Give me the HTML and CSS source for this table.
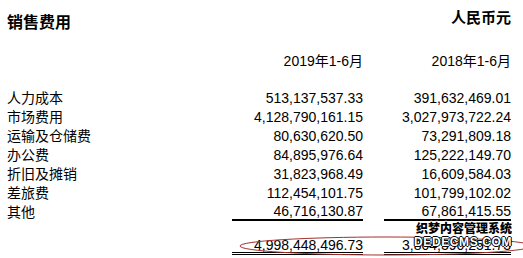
FILE: index.html
```html
<!DOCTYPE html>
<html lang="zh-CN">

<head>
	<meta charset="UTF-8">
	<meta name="viewport" content="width=device-width, initial-scale=1.0">
	<title>销售费用</title>
	<link rel="stylesheet" href="styles.css">
</head>

<body>
	<div class="sheet">
		<div class="head">
			<h1>销售费用</h1>
			<span class="unit">人民币元</span>
		</div>

		<div class="row periods">
			<span></span>
			<span class="num">2019年1-6月</span>
			<span class="num">2018年1-6月</span>
		</div>

		<div class="rows">
			<div class="row">
				<span>人力成本</span>
				<span class="num">513,137,537.33</span>
				<span class="num">391,632,469.01</span>
			</div>
			<div class="row">
				<span>市场费用</span>
				<span class="num">4,128,790,161.15</span>
				<span class="num">3,027,973,722.24</span>
			</div>
			<div class="row">
				<span>运输及仓储费</span>
				<span class="num">80,630,620.50</span>
				<span class="num">73,291,809.18</span>
			</div>
			<div class="row">
				<span>办公费</span>
				<span class="num">84,895,976.64</span>
				<span class="num">125,222,149.70</span>
			</div>
			<div class="row">
				<span>折旧及摊销</span>
				<span class="num">31,823,968.49</span>
				<span class="num">16,609,584.03</span>
			</div>
			<div class="row">
				<span>差旅费</span>
				<span class="num">112,454,101.75</span>
				<span class="num">101,799,102.02</span>
			</div>
			<div class="row last">
				<span>其他</span>
				<span class="num">46,716,130.87</span>
				<span class="num">67,861,415.55</span>
			</div>
		</div>

		<div class="row total">
			<span></span>
			<span class="num">4,998,448,496.73</span>
			<span class="num">3,804,390,251.73</span>
		</div>

		<svg class="mark" width="523" height="40" viewBox="0 0 523 40">
			<ellipse cx="386" cy="27" rx="146" ry="9" fill="none" stroke="#a3302e" stroke-width="1" />
		</svg>

		<div class="watermark">
			<div class="wm-cn">织梦内容管理系统</div>
			<div class="wm-en">DEDECMS.COM</div>
		</div>
	</div>
</body>

</html>
```

FILE: styles.css
```css
* {
	box-sizing: border-box;
}

body {
	margin: 0;
	background: white;
	color: #000;
	font-family: "Liberation Sans", "Noto Sans CJK SC", sans-serif;
	font-size: 14px;
}

.sheet {
	position: relative;
	width: 523px;
	height: 258px;
	padding: 0 12px 0 7px;
	overflow: hidden;
}

.head {
	display: flex;
	justify-content: space-between;
	align-items: flex-start;
	height: 33px;
}

h1 {
	margin: 13px 0 0;
	font-size: 16px;
	line-height: 20px;
	font-weight: 700;
}

.unit {
	margin-top: 8px;
	font-size: 15px;
	line-height: 20px;
	font-weight: 700;
}

.row {
	display: grid;
	grid-template-columns: 1fr 131px 127px;
	column-gap: 21px;
	height: 19px;
	line-height: 19px;
}

.num {
	text-align: right;
}

.periods {
	margin-top: 19px;
}

.rows {
	margin-top: 17.5px;
}

.last .num {
	align-self: start;
	margin-top: 1px;
	line-height: 15px;
	border-bottom: 2px solid #000;
}

.total {
	margin-top: 17.5px;
	height: 16px;
	line-height: 13px;
}

.total .num {
	border-bottom: 3px double #000;
}

.mark {
	position: absolute;
	left: 0;
	top: 219px;
}

.watermark {
	position: absolute;
	right: 11px;
	top: 223px;
	font-weight: 900;
	font-size: 12px;
	line-height: 13px;
	text-align: right;
}

.wm-cn {
	color: #000;
	text-shadow: 1px 0 white, -1px 0 white, 0 1px white, 0 -1px white;
}

.wm-en {
	color: white;
	letter-spacing: 0.6px;
	text-shadow: 1px 0 #000, -1px 0 #000, 0 1px #000, 0 -1px #000;
}
```
